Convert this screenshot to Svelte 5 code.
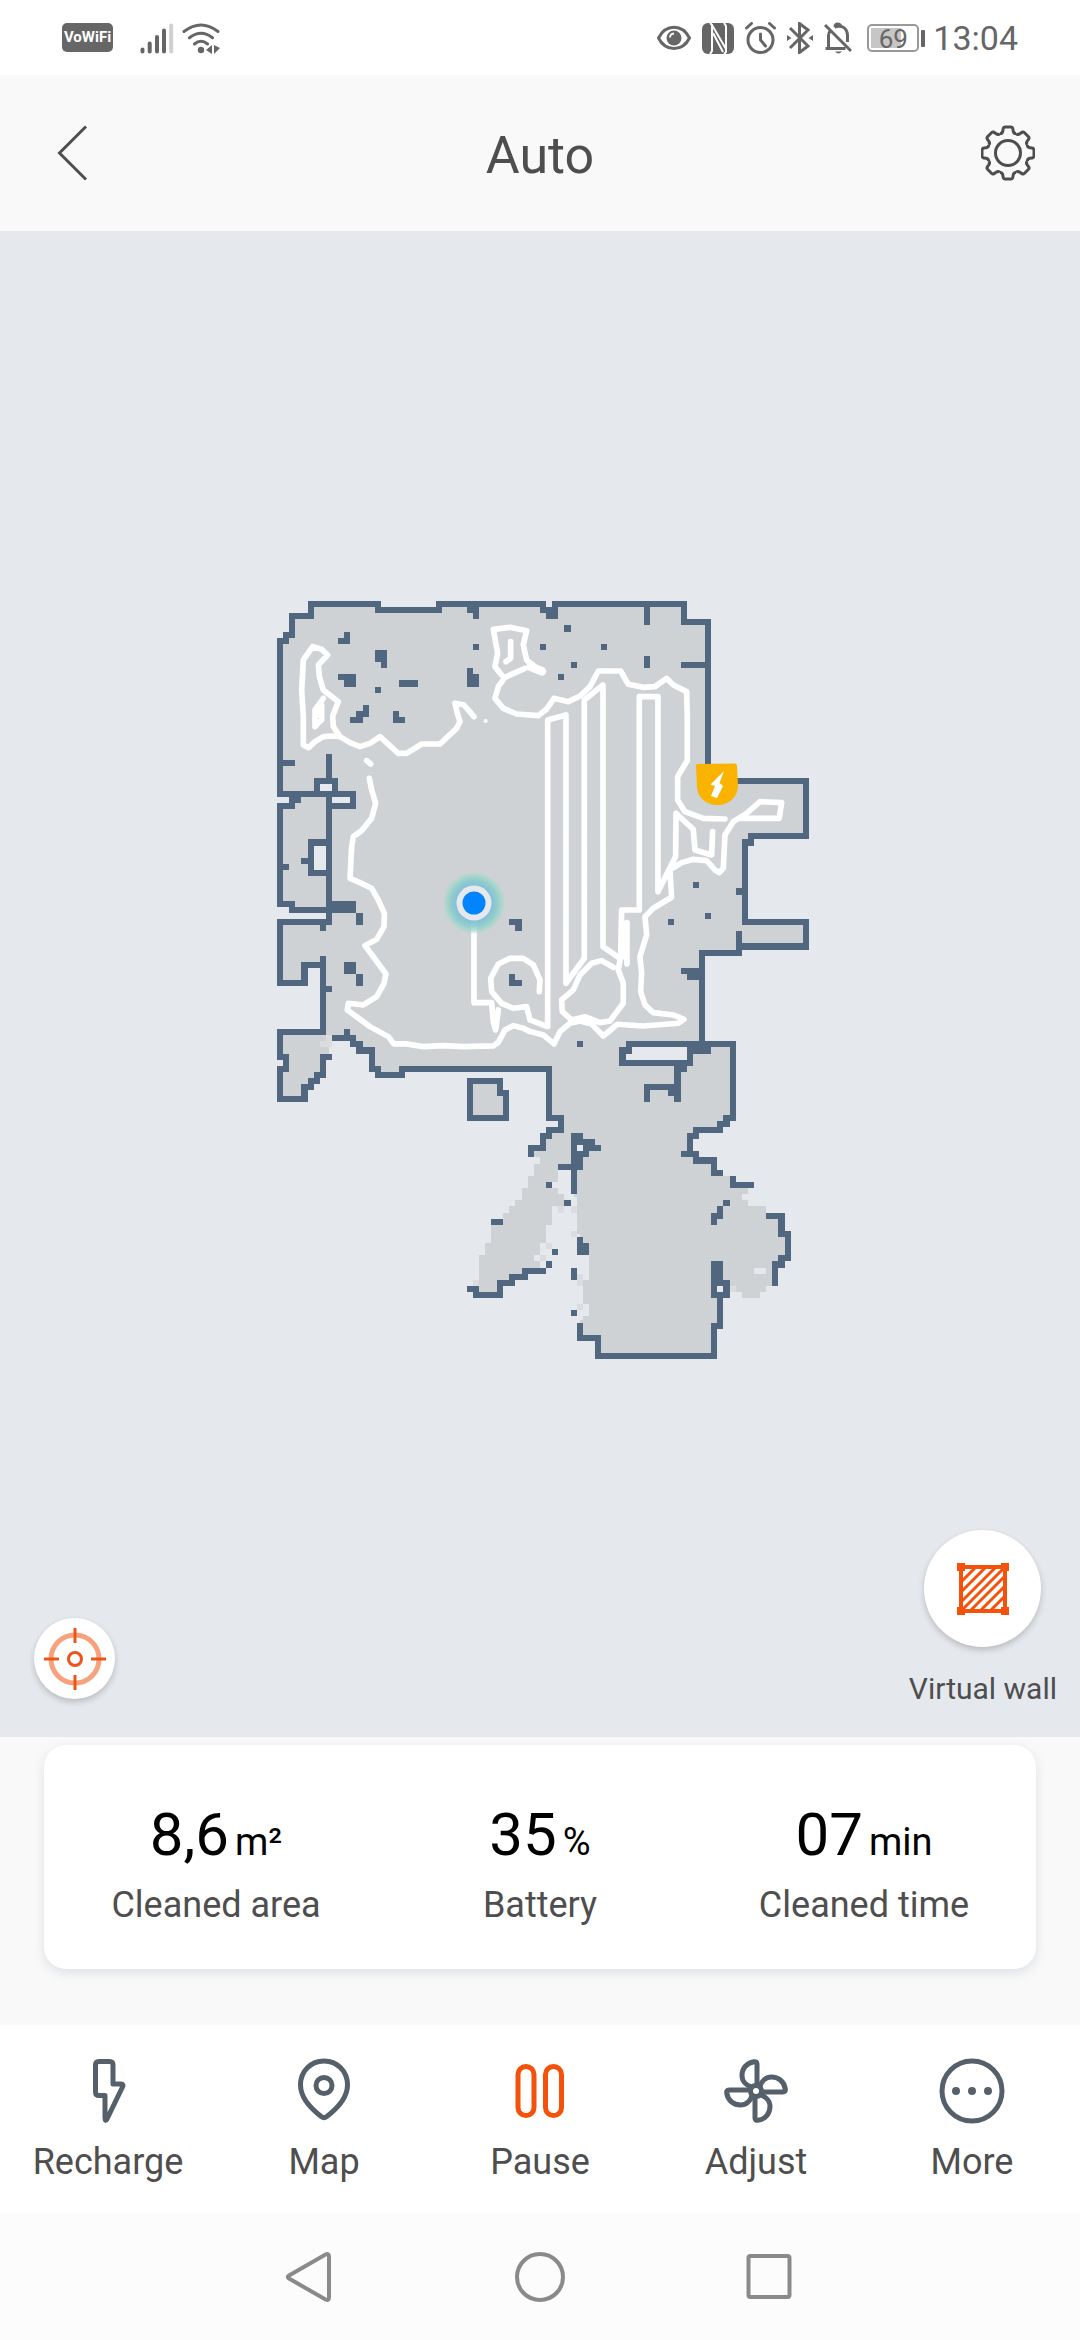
<script lang="ts">
  type Stat = { value: string; unit: string; label: string };
  type Action = { id: string; label: string };

  const stats: Stat[] = [
    { value: '8,6', unit: 'm²', label: 'Cleaned area' },
    { value: '35', unit: '%', label: 'Battery' },
    { value: '07', unit: 'min', label: 'Cleaned time' },
  ];

  const actions: Action[] = [
    { id: 'recharge', label: 'Recharge' },
    { id: 'map', label: 'Map' },
    { id: 'pause', label: 'Pause' },
    { id: 'adjust', label: 'Adjust' },
    { id: 'more', label: 'More' },
  ];

  const quarterTurns = [0, 90, 180, 270];
  const gearTurns = [0, 45, 90, 135, 180, 225, 270, 315];

  // Grid cells, one unit per lidar cell, coordinates at cell centres.
  const floor =
    'M5 0H16V1H26V0H43V1H45V0H66V3H70V29H86V38H77V39H76V52H86V56H75V57H69V72H74V84H73V85H72V86H68V87H67V90H68V91H71V93H72' +
    'V93.5H73.5V95H76.5V96.5H75.5V97.5H76.5V98.5H79.5V99.5H82V103H83V107H82V108H81V111.5H79.5V112.5H78.5V113.5H75.5V112.5H74.5V111.5H73' +
    'V113H72V118H71V123H52V120H49V117H49.5V116.5H50.5V114.5H49.5V110.5H50.5V106.5H49V103H48.5V97H48V92H45.5V94.5H44.5V95.5H45.5V96.5H46.5V98.5' +
    'H44.5V101.5H43.5V104.5H42.5V106.5H41.5V107.5H42.5V109H40V110H38V111H36V113H32V111.5H32.5V106.5H33.5V104.5H34.5V101H36.5V99.5H37.5V98.5H38.5V97.5' +
    'H39.5V95.5H40.5V93.5H41.5V91.5H42.5V90.5H41V89H43V87H44V86H46V84H44V76H20V77H16V76H15V73H13V72H12V71H8.5V72.5H8V74H7V77H6V78H5V79H4V81H0V70H7V59H4V62H0V52H8V50H2V49H0V33H2V32H3V31H0V6H1V5H2V2H5ZM31 78H36V80H37V84H31Z';

  const holes: number[][] = [
    [7, 30, 2, 1], [9, 32, 3, 1], [6, 40, 2, 4], [58, 73, 9, 1], [57, 74, 10, 1],
    [49, 89, 1, 1], [72, 112, 1, 1], [78, 109, 2, 1], [0, 75, 1, 1],
  ];

  const faint: number[][] = [
    [8, 71, 1, 1], [7, 72, 2, 1], [46, 99, 1, 1], [48, 99, 1, 1], [48, 103, 1, 1], [49, 110, 1, 2],
    [49, 115, 1, 1], [44, 105, 1, 1], [43, 107, 1, 1], [32, 111, 1, 1], [74, 112, 1, 1],
  ];

  const walls =
    'M5 0H16V1H26V0H43V1H45V0H66V3H70V29H86V38H77V39H76V52H86V56H75V54M75 56V57H69V72M5 0V2H2V5H1V6H0V31H12V33H9' +
    'M2 32H3M0 33H2V32M0 33V49H2V50H12V49H8M8 25V29M6 30V29H9V30M8 31V52H0V62H4V59H7M7 53V53M7 58V70H0V74H1V76H0V81H4V79H5V78H6V77H7V74H8' +
    'M1 26H2M5 39V44H8M5 39H8M4 42h0M1 43h0M13 51V52M8 63h0M9 71H12V72H13V73H15V76H16V77H20V76H44V84H46V86H44V87H43V89H41V90M11 70V71' +
    'M31 78H36V80H37V84H31ZM48 87H49M48 88H51M50 89H52M48 90H50M48 91H49M46 92H49M48 87V96M44 95h0M47 98h0' +
    'M35 101H36M45 106h0M44 108h0M43 109H40V110H38V111H36V113H32V112H31M49 104V106M50 105V106M48 109V110M48 116h0' +
    'M49 118V120H52V123H71V118H72V114M71 108V113H73V111H71M72 108V111M73 98h0M72 99V100H71V101' +
    'M57 72H74V84H73V85H72V86H68V87H67V90M66 90H68V91H71V93H72M74 94V95H77M80 100H82V103H83V107H82V108H81V111' +
    'M57 72V73H56V75H67V73M68 73H70M66 75V76H65V81M60 81V79H65M64 80h0M49 72h0' +
    'M75 47h0M66 60H69M67 61H69M68 46h0M64 52h0M70 51h0M66 10H69M60 1V3M60 9V10' +
    'M11 5V6H10M16 8V9M17 8V10M10 12H12V13H11M16 14h0M20 13H22M14 17V18H13V19H12M19 18V19H20M31 1H32V2M45 1V2H44V1M32 7h0M31 11V13H32V12H31' +
    'M43 7h0M47 4h0M53 7h0M48 10h0M46 12h0M11 59H12V60H11ZM13 61V62M38 52H39V53M38 61V62H39';

  const trail =
    'M240 440L215 438 190 440 165 455 146 473 130 465 130 380 125 300 130 210 158 170 185 178 203 195 175 225 178 260 190 300 235 335 218 378 220 410 240 440 270 458 300 470 330 460 360 440 415 490 440 490 485 462 540 462 590 415 600 395 592 370 585 340 612 345 642 380' +
    'M190 325L165 360 165 410 178 395 185 390 185 345 175 375M320 512L332 522' +
    'M328 565L335 600 347 640 335 685 305 722 280 740 275 770 270 865 300 878 335 895 355 930 373 970 372 1010 350 1048 315 1067 345 1107 378 1152 372 1180 350 1220 310 1245 265 1240 262 1260 330 1310 385 1340 402 1362 440 1362 490 1370 550 1367 610 1370 700 1368 715 1357 735 1320 760 1307 790 1315 810 1325 850 1335 882 1362 900 1325 930 1300 960 1293 995 1302 1030 1338 1072 1303 1150 1308 1255 1300 1272 1288 1240 1275 1180 1268 1155 1245 1142 1205 1145 1150 1140 1100 1160 1035 1155 980 1180 955 1235 922 1230 840 1265 818 1300 808 1340 812 1365 840 1378 848 1390 835 1395 735 1420 695 1460 670 1500 635 1565 638 1558 685 1440 685' +
    'M1395 687L1330 685 1275 665 1253 630 1253 560 1282 512 1282 380 1280 305 1240 285 1220 265 1185 290 1150 292 1105 283 1082 243 1015 243 990 290 960 318 925 335 882 325 860 357 835 377 770 372 730 355 705 325 715 290 735 262 795 235' +
    'M725 255L705 230 713 190 700 118 750 112 800 122 790 165 800 210 825 230M752 155V205L738 215' +
    'M863 1310V390L918 375V1180L973 1105V330L1029 285V1070L1080 1105' +
    'M1358 725L1355 795 1305 780 1300 718 1248 670 1247 800 1194 905V320H1138V960H1085L1082 1100 1075 1140 1090 1180 1090 1240 1050 1293 1020 1298 975 1280 935 1290 907 1265 905 1230 940 1200 960 1155 995 1120 1025 1112 1060 1132' +
    'M1101 998V1122M1090 1000V1100M642 960V1238H695L700 1295 707 1320 715 1260' +
    'M838 1205L840 1170 820 1125 790 1105 750 1105 715 1122 692 1165 695 1205 725 1240 760 1255 800 1250 810 1290 863 1310';
</script>

<div class="screen">
  <div class="status">
    <div class="status-side">
      <span class="vowifi">VoWiFi</span>
      <svg class="signal" width="34" height="32" viewBox="0 0 34 32" aria-hidden="true">
        <path d="M2.5 27.5v2M9.7 21.5v8M17 15v14.5M24 8.5v21" />
        <path class="off" d="M31.2 3.5v26" />
      </svg>
      <svg class="wifi" width="38" height="32" viewBox="0 0 38 32" aria-hidden="true">
        <path d="M2 9.5q17-13 34 0M7.5 15.8q11.5-9 23 0M12.5 22q6.5-5.500 13 0" />
        <circle cx="19" cy="28" r="3.2" />
        <path class="solid" d="M24 28l6-5v9zM32 23l6 3-6 6z" />
      </svg>
    </div>
    <div class="status-side right">
      <svg width="34" height="32" viewBox="0 0 34 32" aria-hidden="true">
        <path class="line" d="M1.5 16C8.5 1.5 25.5 1.5 32.5 16 25.5 30 8.5 30 1.5 16z" />
        <circle cx="17" cy="16" r="7.5" />
        <path d="M17 11.5q-4 .5-4 4" fill="none" stroke="#fff" stroke-width="1.8" />
      </svg>
      <svg width="32" height="32" viewBox="0 0 32 32" aria-hidden="true">
        <rect width="32" height="31" y="1" rx="6" />
        <path d="M8 1l2 2v26l-2 3M22 1l2 3v26l-2 2M10 3l14 24M11 11l10 19" fill="none" stroke="#fff" stroke-width="2" />
      </svg>
      <svg width="31" height="32" viewBox="0 0 31 32" aria-hidden="true">
        <g class="line"><circle cx="15.5" cy="18" r="12.5" /><path d="M15.5 12v6l5 6M1.5 6l5-4.5M29.5 6l-5-4.5" /></g>
      </svg>
      <svg width="26" height="32" viewBox="0 0 26 32" aria-hidden="true">
        <path class="line butt" d="M3 6l18 18-8.5 6.5V1.5L21 8 3 26" />
        <path d="M0 13l4.5 3L0 19zM26 13l-4.5 3 4.5 3z" />
      </svg>
      <svg width="28" height="32" viewBox="0 0 28 32" aria-hidden="true">
        <path class="line butt" d="M1 3l26 26M1.5 26.5h20M4.5 26V14c0-2 .6-3.6 1.5-5M10.5 5.2c6-2.6 13-.2 13 8.8v6M11 5c0-4 5-4 6 0" />
        <path d="M11 29.5h7q-3.5 4-7 0z" />
      </svg>
      <div class="battery"><span>69</span></div>
      <time class="clock">13:04</time>
    </div>
  </div>

  <header>
    <button type="button" aria-label="Back">
      <svg width="54" height="56" viewBox="0 0 54 56"><path d="M41 1.5L14.500 28 41 54.5" /></svg>
    </button>
    <h1>Auto</h1>
    <button type="button" aria-label="Settings">
      <svg width="54" height="56" viewBox="-27 -28 54 56">
        <circle r="12.5" />
        {#each gearTurns as turn}
          <path
            transform="rotate({turn})"
            d="M-8-19.4C-6-19.4-5.5-20-5.2-22-4.8-25-4.6-26-3-26H3C4.6-26 4.8-25 5.2-22 5.5-20 6-19.4 8-19.4"
          />
        {/each}
      </svg>
    </button>
  </header>

  <main>
    <svg class="floorplan" viewBox="0 231 1080 1506" role="img" aria-label="Cleaning map">
      <defs>
        <radialGradient id="glow">
          <stop offset="0.5" stop-color="#7fb9e0" />
          <stop offset="0.75" stop-color="#8accca" stop-opacity="0.9" />
          <stop offset="0.9" stop-color="#9fd8cb" stop-opacity="0.7" />
          <stop offset="1" stop-color="#9fd8cb" stop-opacity="0" />
        </radialGradient>
      </defs>
      <g transform="translate(277 601) scale(6.115)" shape-rendering="crispEdges">
        <path class="floor" transform="translate(0.5 0.5)" d={floor} />
        {#each holes as [x, y, w, h]}
          <rect class="hole" {x} {y} width={w} height={h} />
        {/each}
        {#each faint as [x, y, w, h]}
          <rect class="faint" {x} {y} width={w} height={h} />
        {/each}
        <path class="walls" transform="translate(0.5 0.5)" d={walls} />
      </g>
      <g class="trail" transform="translate(260 590) scale(0.3333)">
        <path d={trail} />
        <path class="wide" d="M812 230L846 244" />
        <path class="dot" d="M677 393h0" />
      </g>
      <circle cx="474" cy="903" r="31" fill="url(#glow)" />
      <circle cx="474" cy="903" r="17.5" fill="#e5e9ee" />
      <circle cx="474" cy="903" r="11.5" fill="#0084ff" />
      <path
        d="M698 764L735 763.5Q737 763.5 737 766L738 785C738 797 729 805 717.5 805 706 805 697 797 697 786L696 766Q696 764 698 764z"
        fill="#f9b300"
      />
      <path d="M724 771L710.5 784.5 715 786 711 796 717 798 723 786 719.5 783z" fill="#fff" />
    </svg>

    <button type="button" class="round locate" aria-label="Locate robot">
      <svg width="62" height="62" viewBox="0 0 62 62">
        <circle class="ring" cx="31" cy="31" r="24" />
        <circle cx="31" cy="31" r="6.5" />
        <path d="M31 0v15M31 47v15M0 31h15M47 31h15" />
      </svg>
    </button>

    <button type="button" class="wall">
      <span class="round">
        <svg width="54" height="54" viewBox="0 0 54 54">
          <path class="hatch" d="M6 19L19 6M6 29L29 6M6 39L39 6M6 48L48 6M15 48L48 15M25 48L48 25M35 48L48 35" />
          <rect x="5" y="5" width="44" height="44" />
          <path class="corners" d="M5 5h0M49 5h0M5 49h0M49 49h0" />
        </svg>
      </span>
      Virtual wall
    </button>
  </main>

  <section class="summary">
    <dl>
      {#each stats as s (s.label)}
        <div>
          <dt>{s.label}</dt>
          <dd>{s.value}<small>{s.unit}</small></dd>
        </div>
      {/each}
    </dl>
  </section>

  <nav class="actions">
    {#each actions as a (a.id)}
      <button type="button" class={a.id}>
        <svg width="66" height="66" viewBox="0 0 66 66" aria-hidden="true">
          {#if a.id === 'recharge'}
            <path d="M24 3.5H34.5Q38 3.5 38 7V26H46Q49 26 47.5 29L32 61Q30 64 30 60V37.5H24Q20.5 37.5 20.5 34V7Q20.5 3.5 24 3.5z" />
          {:else if a.id === 'map'}
            <path d="M33 3C20 3 9.5 13 9.5 27 9.5 41 23 53 30.5 58.7Q33 60.5 35.5 58.7C43 53 56.5 41 56.5 27 56.5 13 46 3 33 3z" />
            <circle cx="33" cy="27.5" r="8" />
          {:else if a.id === 'pause'}
            <rect x="11" y="8.5" width="16" height="49" rx="8" />
            <rect x="38.5" y="8.5" width="16" height="49" rx="8" />
          {:else if a.id === 'adjust'}
            <circle cx="33" cy="33" r="5.5" />
            {#each quarterTurns as turn}
              <path transform="rotate({turn} 33 33)" d="M34 27V6Q34 3.3 31 3.7C23 5 19 11 19 17.5 19 23 23 27.5 28.5 29" />
            {/each}
          {:else}
            <circle cx="33" cy="33" r="30" />
            <path class="dots" d="M17 33h0M33 33h0M49 33h0" />
          {/if}
        </svg>
        {a.label}
      </button>
    {/each}
  </nav>

  <nav class="system" aria-label="System navigation">
    <button type="button" aria-label="Back">
      <svg width="54" height="54" viewBox="0 0 54 54"><path d="M6 25.5L42.5 4.5Q46 3 46 6.5V47.5Q46 51 42.5 49.5L6 28.5Q3.5 27 6 25.5z" /></svg>
    </button>
    <button type="button" aria-label="Home">
      <svg width="54" height="54" viewBox="0 0 54 54"><circle cx="27" cy="27" r="23" /></svg>
    </button>
    <button type="button" aria-label="Recent apps">
      <svg width="54" height="54" viewBox="0 0 54 54"><rect x="5.5" y="6" width="41" height="41" rx="2" /></svg>
    </button>
  </nav>
</div>

<style>
  :global(body) {
    margin: 0;
    background: #f9f9f9;
  }
  .screen {
    display: flex;
    flex-direction: column;
    font-family: Roboto, sans-serif;
    color: #4e4e4e;
  }
  button {
    border: 0;
    padding: 0;
    background: none;
    color: inherit;
    font: inherit;
    cursor: pointer;
  }
  svg {
    display: block;
    flex: none;
  }

  .status {
    display: flex;
    justify-content: space-between;
    align-items: center;
    height: 75px;
    padding: 0 62px;
    background: #fff;
    color: #666;
  }
  .status-side {
    display: flex;
    align-items: center;
  }
  .status-side svg {
    fill: #666;
  }
  .right {
    gap: 11px;
  }
  .vowifi {
    width: 51px;
    border-radius: 5px;
    background: #666;
    color: #fff;
    font-size: 15px;
    font-weight: 700;
    line-height: 29px;
    text-align: center;
  }
  .signal {
    margin-left: 27px;
  }
  .signal path {
    stroke: #666;
    stroke-width: 4;
    stroke-linecap: round;
  }
  .signal .off {
    stroke: #d0d0d0;
  }
  .wifi {
    margin-left: 8px;
  }
  .wifi path {
    fill: none;
    stroke: #666;
    stroke-width: 3;
    stroke-linecap: round;
  }
  .wifi .solid {
    fill: #666;
    stroke: none;
  }
  .line {
    fill: none;
    stroke: #666;
    stroke-width: 3;
    stroke-linecap: round;
  }
  .butt {
    stroke-linecap: butt;
  }
  .battery {
    position: relative;
    box-sizing: border-box;
    width: 52px;
    height: 28px;
    margin: 0 3px 0 4px;
    padding: 2px;
    border: 2px solid #999;
    border-radius: 5px;
    background: linear-gradient(90deg, #c6c6c6 69%, #fff 69%) content-box;
    font-size: 26px;
    line-height: 22px;
    text-align: center;
  }
  .battery::after {
    content: '';
    position: absolute;
    top: 4px;
    right: -8px;
    width: 4px;
    height: 17px;
    border-radius: 1px;
    background: #666;
  }
  .clock {
    font-size: 34px;
    line-height: 40px;
  }

  header {
    display: flex;
    justify-content: space-between;
    align-items: center;
    height: 156px;
    padding: 0 45px;
  }
  header svg {
    fill: none;
    stroke: #4e4e4e;
    stroke-width: 3;
  }
  h1 {
    margin: 0;
    padding-top: 6px;
    font-size: 52px;
    font-weight: 400;
    line-height: 60px;
  }

  main {
    position: relative;
    background: #e5e9ee;
  }
  .floorplan {
    width: 100%;
    height: auto;
  }
  .floor {
    fill: #ced2d4;
  }
  .hole {
    fill: #e5e9ee;
  }
  .faint {
    fill: #dadcdf;
  }
  .walls {
    fill: none;
    stroke: #50677f;
    stroke-width: 1;
    stroke-linecap: square;
  }
  .trail {
    fill: none;
    stroke: #fff;
    stroke-width: 17;
    stroke-linecap: round;
    stroke-linejoin: round;
  }
  .trail .wide {
    stroke-width: 26;
  }
  .trail .dot {
    stroke-width: 12;
  }
  .round {
    display: flex;
    align-items: center;
    justify-content: center;
    border-radius: 50%;
    background: #fff;
    box-shadow: 0 3px 6px rgba(0, 0, 0, 0.2);
  }
  .round svg {
    fill: none;
    stroke: #ea5518;
    stroke-width: 3;
  }
  .locate {
    position: absolute;
    left: 34px;
    bottom: 38px;
    width: 81px;
    height: 81px;
  }
  .locate .ring {
    stroke: #f7a27e;
    stroke-width: 5;
  }
  .wall {
    position: absolute;
    right: 23px;
    bottom: 30px;
    display: flex;
    flex-direction: column;
    align-items: center;
    gap: 24px;
    font-size: 30px;
    line-height: 36px;
  }
  .wall .round {
    width: 117px;
    height: 117px;
  }
  .wall svg {
    stroke: #f4510b;
    stroke-width: 4;
  }
  .wall .hatch {
    stroke-width: 3;
  }
  .wall .corners {
    stroke-width: 8;
    stroke-linecap: square;
  }

  .summary {
    padding: 8px 44px 56px;
  }
  dl {
    display: grid;
    grid-template-columns: repeat(3, 1fr);
    margin: 0;
    padding: 50px 10px 34px;
    border-radius: 22px;
    background: #fff;
    box-shadow: 0 4px 12px rgba(70, 90, 120, 0.15);
  }
  dl div {
    display: flex;
    flex-direction: column-reverse;
    align-items: center;
  }
  dt {
    font-size: 36px;
    line-height: 60px;
  }
  dd {
    margin: 0;
    color: #000;
    font-size: 60px;
    line-height: 80px;
  }
  small {
    margin-left: 6px;
    font-size: 38px;
    line-height: 40px;
  }

  .actions {
    display: grid;
    grid-template-columns: repeat(5, 1fr);
    padding: 33px 0 29px;
    background: #fff;
  }
  .actions button {
    display: flex;
    flex-direction: column;
    align-items: center;
    gap: 16px;
    font-size: 36px;
    line-height: 44px;
  }
  .actions svg {
    fill: none;
    stroke: #56606b;
    stroke-width: 5;
    stroke-linecap: round;
    stroke-linejoin: round;
  }
  .actions .pause svg {
    stroke: #f4510b;
  }
  .actions .dots {
    stroke-width: 8;
  }

  .system {
    display: grid;
    grid-template-columns: repeat(3, 230px);
    justify-content: center;
    height: 127px;
    background: #fcfcfc;
  }
  .system button {
    display: grid;
    place-items: center;
  }
  .system svg {
    fill: none;
    stroke: #8a8a8a;
    stroke-width: 4;
  }
</style>
